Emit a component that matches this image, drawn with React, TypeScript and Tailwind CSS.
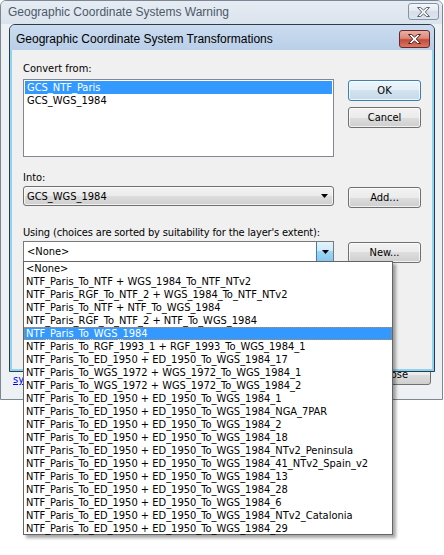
import React from "react";

const items = [
  "<None>",
  "NTF_Paris_To_NTF + WGS_1984_To_NTF_NTv2",
  "NTF_Paris_RGF_To_NTF_2 + WGS_1984_To_NTF_NTv2",
  "NTF_Paris_To_NTF + NTF_To_WGS_1984",
  "NTF_Paris_RGF_To_NTF_2 + NTF_To_WGS_1984",
  "NTF_Paris_To_WGS_1984",
  "NTF_Paris_To_RGF_1993_1 + RGF_1993_To_WGS_1984_1",
  "NTF_Paris_To_ED_1950 + ED_1950_To_WGS_1984_17",
  "NTF_Paris_To_WGS_1972 + WGS_1972_To_WGS_1984_1",
  "NTF_Paris_To_WGS_1972 + WGS_1972_To_WGS_1984_2",
  "NTF_Paris_To_ED_1950 + ED_1950_To_WGS_1984_1",
  "NTF_Paris_To_ED_1950 + ED_1950_To_WGS_1984_NGA_7PAR",
  "NTF_Paris_To_ED_1950 + ED_1950_To_WGS_1984_2",
  "NTF_Paris_To_ED_1950 + ED_1950_To_WGS_1984_18",
  "NTF_Paris_To_ED_1950 + ED_1950_To_WGS_1984_NTv2_Peninsula",
  "NTF_Paris_To_ED_1950 + ED_1950_To_WGS_1984_41_NTv2_Spain_v2",
  "NTF_Paris_To_ED_1950 + ED_1950_To_WGS_1984_13",
  "NTF_Paris_To_ED_1950 + ED_1950_To_WGS_1984_28",
  "NTF_Paris_To_ED_1950 + ED_1950_To_WGS_1984_6",
  "NTF_Paris_To_ED_1950 + ED_1950_To_WGS_1984_NTv2_Catalonia",
  "NTF_Paris_To_ED_1950 + ED_1950_To_WGS_1984_29",
];

function XGlyph({ fill, stroke }: { fill: string; stroke: string }) {
  return (
    <svg width="13" height="10" viewBox="0 0 13 10">
      <polygon
        points="0.5,0.5 3.5,0.5 6.5,3 9.5,0.5 12.5,0.5 8.3,5 12.5,9.5 9.5,9.5 6.5,7 3.5,9.5 0.5,9.5 4.7,5"
        fill={fill}
        stroke={stroke}
        strokeWidth="1"
        strokeLinejoin="round"
      />
    </svg>
  );
}

function Arrow() {
  return (
    <svg width="7" height="4" viewBox="0 0 7 4">
      <polygon points="0,0 7,0 3.5,4" fill="#000" />
    </svg>
  );
}

function Btn({ label, def }: { label: string; def?: boolean }) {
  return (
    <div
      className={
        def
          ? "h-[21px] w-[73px] rounded-[3px] border border-[#3c7fb1] bg-[linear-gradient(#edf5fb_0%,#e3eef7_50%,#d2e3f0_50%,#c5d9e9_100%)] shadow-[inset_0_0_0_1px_rgba(255,255,255,0.7)] flex items-center justify-center text-black"
          : "h-[21px] w-[73px] rounded-[3px] border border-[#707070] bg-[linear-gradient(#f2f2f2_0%,#ebebeb_50%,#dddddd_50%,#cfcfcf_100%)] shadow-[inset_0_0_0_1px_rgba(255,255,255,0.7)] flex items-center justify-center text-black"
      }
    >
      {label}
    </div>
  );
}

export default function App() {
  return (
    <div className="relative w-[444px] h-[555px] bg-white overflow-hidden text-[11px] leading-[13px] text-black [font-family:'DejaVu_Sans_Condensed','DejaVu_Sans',sans-serif] [font-stretch:condensed]">
      {/* Outer window */}
      <div className="w-[443px] h-[400px] border border-[#7d8793] rounded-t-[6px] bg-[#f0f0f0] flex flex-col">
        <div className="h-[23px] flex items-start justify-between rounded-t-[5px] bg-[linear-gradient(#e6ecf3,#dbe3ed)] pl-[7px] pr-[3px]">
          <span className="mt-[4px] text-[12px] leading-[15px] text-[#4b5968] [font-family:'Liberation_Sans',sans-serif] [font-stretch:normal]">
            Geographic Coordinate Systems Warning
          </span>
          <div className="mt-[2px] w-[31px] h-[17px] rounded-[3px] border border-[#8593a4] bg-[linear-gradient(#f4f7fa,#e2e9f1_50%,#d6dfea_50%,#dce4ee)] flex items-center justify-center">
            <XGlyph fill="#f4f4f4" stroke="#5d6670" />
          </div>
        </div>
        <div className="flex flex-col pl-[8px] pr-[6px] bg-[#eef1f4] flex-1">
          {/* Inner dialog */}
          <div className="relative z-10 w-[426px] h-[348px] border border-[#2e3b48] rounded-t-[6px] flex flex-col bg-[#8fd3f3]">
            <div className="h-[25px] shrink-0 flex items-start justify-between rounded-t-[5px] bg-[linear-gradient(#cbdcef,#b9cfe8)] pl-[6px] pr-[4px]">
              <span className="mt-[7px] text-[12px] leading-[15px] text-black [font-family:'Liberation_Sans',sans-serif] [font-stretch:normal]">
                Geographic Coordinate System Transformations
              </span>
              <div className="mt-[5px] w-[31px] h-[18px] rounded-[3px] border border-[#6b2730] bg-[linear-gradient(#eab0a2_0%,#dd8a78_45%,#c44b3c_55%,#d67a62_100%)] flex items-center justify-center">
                <XGlyph fill="#ffffff" stroke="#5a1f1f" />
              </div>
            </div>
            <div className="flex-1 mx-[2px] mb-[2px] bg-[#f0f0f0] pt-[12px] pl-[11px] flex flex-col">
              <div className="h-[13px]">Convert from:</div>
              <div className="mt-[4px] flex items-start gap-[14px]">
                <div className="w-[311px] h-[78px] border border-[#828790] bg-white p-[1px] flex flex-col">
                  <div className="h-[13px] bg-[#3399ff] text-white pl-[2px]">GCS_NTF_Paris</div>
                  <div className="h-[13px] pl-[2px]">GCS_WGS_1984</div>
                </div>
                <div className="pt-[1px] flex flex-col gap-[6px]">
                  <Btn label="OK" def />
                  <Btn label="Cancel" />
                </div>
              </div>
              <div className="mt-[14px] h-[13px]">Into:</div>
              <div className="mt-[2px] flex items-start gap-[14px]">
                <div className="w-[311px] h-[20px] rounded-[3px] border border-[#707070] bg-[linear-gradient(#f2f2f2_0%,#ebebeb_50%,#dddddd_50%,#cfcfcf_100%)] shadow-[inset_0_0_0_1px_rgba(255,255,255,0.7)] flex items-center justify-between pl-[3px] pr-[5px]">
                  <span>GCS_WGS_1984</span>
                  <Arrow />
                </div>
                <div className="mt-[1px]">
                  <Btn label="Add..." />
                </div>
              </div>
              <div className="mt-[18px] h-[13px] tracking-[-0.15px]">
                Using (choices are sorted by suitability for the layer's extent):
              </div>
              <div className="mt-[2px] flex items-start gap-[14px]">
                <div className="w-[311px] h-[21px] border border-[#7a7a7a] bg-white flex items-stretch justify-between">
                  <span className="pl-[3px] self-center">&lt;None&gt;</span>
                  <div className="w-[17px] border-l border-[#3c7fb1] bg-[linear-gradient(#e3f3fc_0%,#cde9f9_50%,#9fd5f3_50%,#87c8ef_100%)] flex items-center justify-center">
                    <Arrow />
                  </div>
                </div>
                <div className="mt-[1px]">
                  <Btn label="New..." />
                </div>
              </div>
            </div>
          </div>
          {/* bottom row of outer window, partly hidden */}
          <div className="mt-[-8px] flex items-start justify-between pl-[4px] pr-[5px]">
            <span className="mt-[9px] whitespace-nowrap text-[#0000ee] underline">sy</span>
            <div className="h-[21px] w-[73px] rounded-[3px] border border-[#707070] bg-[linear-gradient(#f2f2f2_0%,#ebebeb_50%,#dddddd_50%,#cfcfcf_100%)] flex items-center justify-center">
              Close
            </div>
          </div>
        </div>
      </div>

      {/* Drop-down list */}
      <div className="absolute z-20 left-[23px] top-[261px] w-[370px] h-[274px] border border-[#646464] bg-white shadow-[3px_3px_3px_rgba(0,0,0,0.35)] flex flex-col">
        {items.map((t, i) =>
          i === 5 ? (
            <div
              key={i}
              className="h-[13px] shrink-0 bg-[#3399ff] text-white pl-[2px] outline outline-1 outline-dotted outline-[#c88a4a] -outline-offset-1 whitespace-pre"
            >
              {t}
            </div>
          ) : (
            <div key={i} className="h-[13px] shrink-0 pl-[2px] whitespace-pre">
              {t}
            </div>
          )
        )}
      </div>
    </div>
  );
}
